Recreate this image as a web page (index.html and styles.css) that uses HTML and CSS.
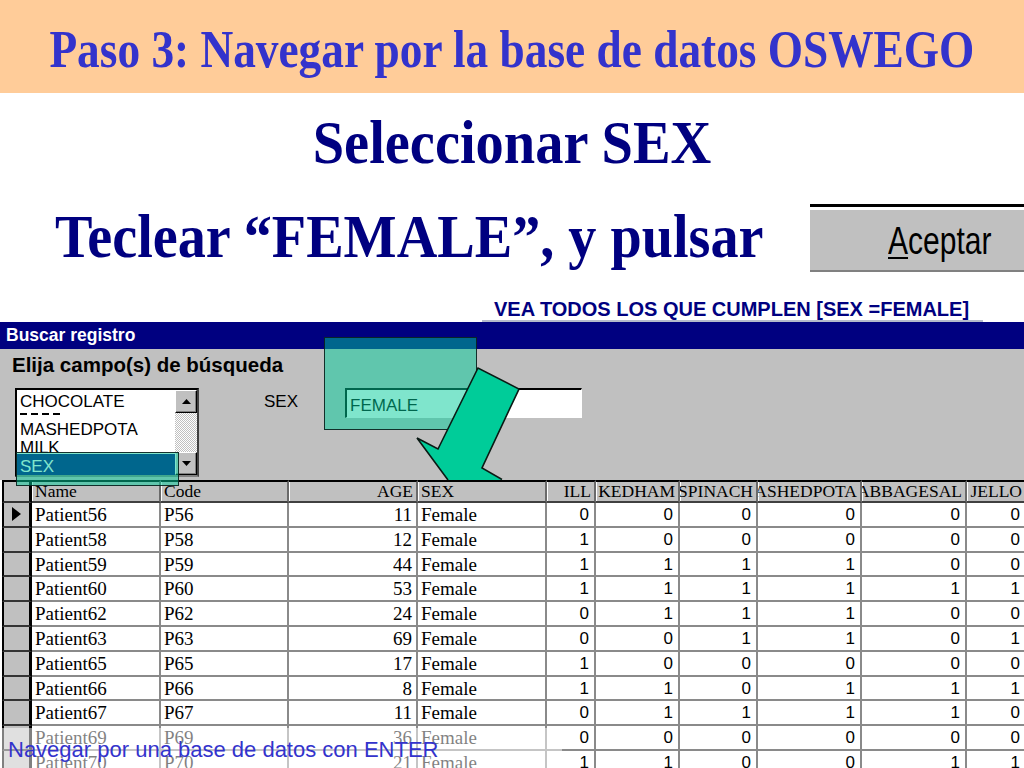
FILE: index.html
```html
<!DOCTYPE html>
<html lang="es">
<head>
<meta charset="utf-8">
<title>Paso 3: Navegar por la base de datos OSWEGO</title>
<link rel="stylesheet" href="styles.css">
</head>
<body>
<div class="slide">
  <header class="band"><h1 class="title">Paso 3: Navegar por la base de datos OSWEGO</h1></header>
  <h2 class="sel"><span class="sel-text">Seleccionar SEX</span></h2>
  <div class="teclear-row">
    <p class="teclear">Teclear “FEMALE”, y pulsar</p>
    <div class="btn-shot">
      <div class="btn-face"><span class="btn-label"><u>A</u>ceptar</span></div>
    </div>
  </div>
  <div class="note-row"><div class="note">VEA TODOS LOS QUE CUMPLEN [SEX =FEMALE]</div></div>

  <section class="win">
    <div class="win-title">Buscar registro</div>
    <div class="win-body">
      <div class="win-heading">Elija campo(s) de búsqueda</div>
      <div class="win-row">
        <div class="listbox">
          <div class="list-items">
            <div class="li">CHOCOLATE</div>
            <div class="li-dash"></div>
            <div class="li">MASHEDPOTA</div>
            <div class="li">MILK</div>
            <div class="li li-sel">SEX</div>
          </div>
          <div class="scroll">
            <div class="sb-btn"><svg width="9" height="5" viewBox="0 0 9 5"><polygon points="4.5,0 9,5 0,5" fill="#000"/></svg></div>
            <div class="sb-track"></div>
            <div class="sb-btn"><svg width="9" height="5" viewBox="0 0 9 5"><polygon points="0,0 9,0 4.5,5" fill="#000"/></svg></div>
          </div>
        </div>
        <div class="field-label">SEX</div>
        <div class="field">FEMALE</div>
      </div>
    </div>

    <div class="grid">
      <div class="h s"></div><div class="h">Name</div><div class="h">Code</div><div class="h r">AGE</div><div class="h">SEX</div><div class="h r">ILL</div><div class="h r">KEDHAM</div><div class="h r">SPINACH</div><div class="h r">MASHEDPOTA</div><div class="h r">CABBAGESAL</div><div class="h r">JELLO</div>

      <div class="s"><svg width="9" height="14" viewBox="0 0 9 14"><polygon points="0,0 9,7 0,14" fill="#000"/></svg></div><div class="d">Patient56</div><div class="d">P56</div><div class="d r">11</div><div class="d">Female</div><div class="d r n">0</div><div class="d r n">0</div><div class="d r n">0</div><div class="d r n">0</div><div class="d r n">0</div><div class="d r n">0</div>

      <div class="s"></div><div class="d">Patient58</div><div class="d">P58</div><div class="d r">12</div><div class="d">Female</div><div class="d r n">1</div><div class="d r n">0</div><div class="d r n">0</div><div class="d r n">0</div><div class="d r n">0</div><div class="d r n">0</div>

      <div class="s"></div><div class="d">Patient59</div><div class="d">P59</div><div class="d r">44</div><div class="d">Female</div><div class="d r n">1</div><div class="d r n">1</div><div class="d r n">1</div><div class="d r n">1</div><div class="d r n">0</div><div class="d r n">0</div>

      <div class="s"></div><div class="d">Patient60</div><div class="d">P60</div><div class="d r">53</div><div class="d">Female</div><div class="d r n">1</div><div class="d r n">1</div><div class="d r n">1</div><div class="d r n">1</div><div class="d r n">1</div><div class="d r n">1</div>

      <div class="s"></div><div class="d">Patient62</div><div class="d">P62</div><div class="d r">24</div><div class="d">Female</div><div class="d r n">0</div><div class="d r n">1</div><div class="d r n">1</div><div class="d r n">1</div><div class="d r n">0</div><div class="d r n">0</div>

      <div class="s"></div><div class="d">Patient63</div><div class="d">P63</div><div class="d r">69</div><div class="d">Female</div><div class="d r n">0</div><div class="d r n">0</div><div class="d r n">1</div><div class="d r n">1</div><div class="d r n">0</div><div class="d r n">1</div>

      <div class="s"></div><div class="d">Patient65</div><div class="d">P65</div><div class="d r">17</div><div class="d">Female</div><div class="d r n">1</div><div class="d r n">0</div><div class="d r n">0</div><div class="d r n">0</div><div class="d r n">0</div><div class="d r n">0</div>

      <div class="s"></div><div class="d">Patient66</div><div class="d">P66</div><div class="d r">8</div><div class="d">Female</div><div class="d r n">1</div><div class="d r n">1</div><div class="d r n">0</div><div class="d r n">1</div><div class="d r n">1</div><div class="d r n">1</div>

      <div class="s"></div><div class="d">Patient67</div><div class="d">P67</div><div class="d r">11</div><div class="d">Female</div><div class="d r n">0</div><div class="d r n">1</div><div class="d r n">1</div><div class="d r n">1</div><div class="d r n">1</div><div class="d r n">0</div>

      <div class="s"></div><div class="d">Patient69</div><div class="d">P69</div><div class="d r">36</div><div class="d">Female</div><div class="d r n">0</div><div class="d r n">0</div><div class="d r n">0</div><div class="d r n">0</div><div class="d r n">0</div><div class="d r n">0</div>

      <div class="s"></div><div class="d">Patient70</div><div class="d">P70</div><div class="d r">21</div><div class="d">Female</div><div class="d r n">1</div><div class="d r n">1</div><div class="d r n">0</div><div class="d r n">0</div><div class="d r n">1</div><div class="d r n">1</div>
    </div>
  </section>

  <div class="hl hl-field"></div>
  <div class="hl hl-list"></div>
  <svg class="arrow" width="120" height="120" viewBox="0 0 120 120">
    <polygon points="68,8 109,29 72,108 92,120 38,120 7,78 28,89" fill="#00CC99"/>
    <polyline points="38,120 7,78 28,89 68,8 109,29 72,108 92,119.5" fill="none" stroke="#0a1a14" stroke-width="1.6" stroke-linejoin="miter"/>
  </svg>
  <div class="caption">Navegar por una base de datos con ENTER</div>
</div>
</body>
</html>
```

FILE: styles.css
```css
* { box-sizing: border-box; }
html, body { margin: 0; padding: 0; overflow: hidden; }
body {
  background: #fff;
  font-family: "Liberation Sans", Arial, sans-serif;
  width: 1024px;
  height: 768px;
}
.slide { position: relative; width: 1024px; height: 768px; overflow: hidden; }

/* Top band */
.band {
  height: 93px;
  padding-top: 6px;
  background: #FFCC99;
  display: flex;
  justify-content: center;
  align-items: center;
}
.title {
  margin: 0;
  font: bold 53px/53px "Liberation Serif", "Times New Roman", serif;
  color: #3333CC;
  white-space: nowrap;
  transform: scaleX(0.855);
}

/* Subtitles */
.sel {
  margin: 18px 0 0;
  height: 62px;
  display: flex;
  justify-content: center;
  font: bold 62px/62px "Liberation Serif", "Times New Roman", serif;
  color: #000080;
  white-space: nowrap;
}
.sel-text { display: inline-block; transform: scaleX(0.91); }

.teclear-row { display: flex; margin-top: 31px; height: 68px; }
.teclear {
  margin: 1px 0 0 55px;
  width: 715px;
  flex: none;
  font: bold 62px/62px "Liberation Serif", "Times New Roman", serif;
  color: #000080;
  white-space: nowrap;
  transform: scaleX(0.906);
  transform-origin: left center;
}
.btn-shot {
  flex: none;
  margin-left: auto;
  width: 214px;
  height: 68px;
  border-top: 3px solid #000;
  padding-top: 3px;
  background: #fff;
}
.btn-face {
  height: 62px;
  background: #C0C0C0;
  border-bottom: 2px solid #808080;
  padding: 2px 0 0 78px;
  overflow: hidden;
}
.btn-label {
  display: inline-block;
  font: 39px/58px "Liberation Sans", Arial, sans-serif;
  color: #000;
  white-space: nowrap;
  transform: scaleX(0.77);
  transform-origin: left center;
}
.btn-label u { text-decoration-thickness: 2px; text-underline-offset: 3px; }

/* Note */
.note-row { height: 50px; }
.note {
  margin-left: 482px;
  width: 501px;
  height: 50px;
  padding: 26px 0 0 12px;
  border-bottom: 2px solid #B4BACB;
  font: bold 20px/22px "Liberation Sans", Arial, sans-serif;
  color: #000080;
  white-space: nowrap;
}

/* Window */
.win-title {
  height: 27px;
  background: #000080;
  color: #fff;
  font: bold 17.5px/27px "Liberation Sans", Arial, sans-serif;
  padding-left: 6px;
}
.win-body {
  height: 131px;
  background: #C0C0C0;
  padding: 4px 0 0 12px;
}
.win-heading {
  font: bold 20.5px/24px "Liberation Sans", Arial, sans-serif;
  color: #000;
  white-space: nowrap;
}
.win-row { display: flex; align-items: flex-start; margin-top: 11px; }

.listbox {
  margin-left: 3px;
  width: 184px;
  height: 89px;
  display: flex;
  background: #fff;
  border: 2px solid #000;
  border-right-color: #404040;
  border-bottom-color: #808080;
}
.list-items {
  flex: 1;
  padding-top: 2.85px;
  overflow: hidden;
  font: 17px/18.5px "Liberation Sans", Arial, sans-serif;
  color: #000;
}
.li { height: 18.5px; padding-left: 3px; white-space: nowrap; }
.li-dash {
  height: 9.5px;
  background: repeating-linear-gradient(90deg, #000 0 7px, transparent 7px 11px) 3px 2px / 44px 2px no-repeat;
}
.li-sel {
  margin-top: -4px;
  height: 22px;
  padding-top: 3px;
  line-height: 19px;
  background: #000080;
  color: #fff;
}
.scroll { width: 22px; flex: none; display: flex; flex-direction: column; }
.sb-btn {
  height: 23px;
  flex: none;
  background: #C0C0C0;
  border: 1px solid;
  border-color: #fff #000 #000 #fff;
  box-shadow: inset -1px -1px 0 #808080;
  display: flex;
  align-items: center;
  justify-content: center;
}
.sb-track {
  flex: 1;
  background: repeating-conic-gradient(#fff 0 25%, #C0C0C0 0 50%) 0 0 / 2px 2px;
}
.field-label {
  margin: 3.6px 0 0 65px;
  width: 81px;
  font: 17px/19px "Liberation Sans", Arial, sans-serif;
  color: #000;
}
.field {
  width: 237px;
  height: 30px;
  background: #fff;
  border-top: 2px solid #000;
  border-left: 2px solid #000;
  border-right: 1px solid #fff;
  border-bottom: 1px solid #fff;
  padding: 6px 0 0 3px;
  font: 17px/19px "Liberation Sans", Arial, sans-serif;
  color: #000;
}

/* Data grid */
.grid {
  display: grid;
  margin-left: 2px;
  grid-template-columns: 30px 129px 128px 129px 129px 49px 84px 78px 104px 105px 60px;
  grid-template-rows: 23px;
  grid-auto-rows: 24.8px;
  width: 1025px;
}
.h {
  background: #C0C0C0;
  border-top: 2px solid #000;
  border-bottom: 2px solid #404040;
  border-right: 2px solid #6a6a6a;
  box-shadow: inset 1px 0 0 #fff;
  font: 17.5px/19px "Liberation Serif", "Times New Roman", serif;
  color: #000;
  padding: 0 3px 0 3px;
  display: flex;
  overflow: hidden;
  white-space: nowrap;
}
.r { justify-content: flex-end; }
.d {
  background: #fff;
  border-right: 2px solid #8a8a8a;
  border-bottom: 2px solid #8a8a8a;
  font: 19px/20.8px "Liberation Serif", "Times New Roman", serif;
  color: #000;
  padding: 2px 4px 0 3px;
  display: flex;
  overflow: hidden;
  white-space: nowrap;
}
.d.n { font: 17px/20.8px "Liberation Sans", Arial, sans-serif; padding-right: 5px; }
.s {
  background: #C0C0C0;
  border-left: 2px solid #000;
  border-right: 3px solid #000;
  border-bottom: 2px solid #333;
  display: flex;
  align-items: center;
  justify-content: center;
  box-shadow: none;
  padding: 0;
}
.h.s { border-bottom: 2px solid #333; }

/* Overlays */
.hl {
  position: absolute;
  background: rgba(0, 204, 153, 0.5);
  border: 1.5px solid rgba(10, 30, 28, 0.9);
}
.hl-field { left: 324px; top: 337px; width: 153px; height: 93px; }
.hl-list { left: 16px; top: 452px; width: 163px; height: 34px; }
.arrow { position: absolute; left: 410px; top: 360px; }
.caption {
  position: absolute;
  left: 0;
  top: 728px;
  width: 562px;
  height: 40px;
  background: rgba(255, 255, 255, 0.5);
  color: #3333CC;
  font: 22px/40px "Liberation Sans", Arial, sans-serif;
  padding: 1.5px 0 0 8px;
  white-space: nowrap;
}
```
